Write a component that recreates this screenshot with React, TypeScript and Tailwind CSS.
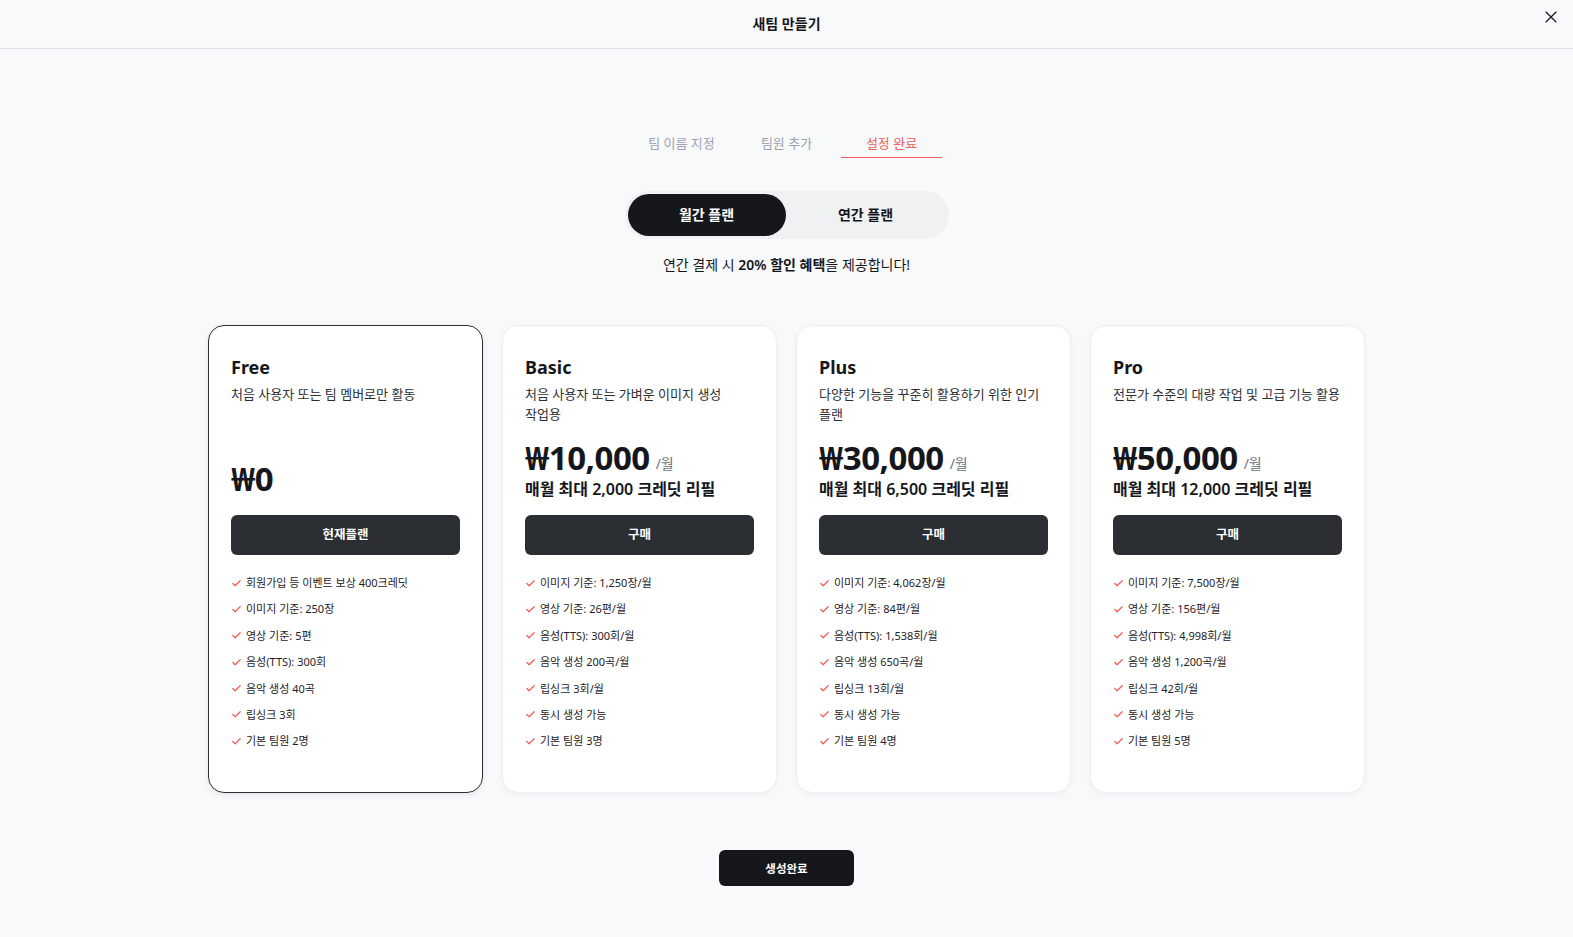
import { Check, X } from 'lucide-react';

interface Plan {
  name: string;
  desc: string;
  price: string;
  credit?: string;
  button: string;
  current?: boolean;
  features: string[];
}

const plans: Plan[] = [
  {
    name: 'Free',
    desc: '처음 사용자 또는 팀 멤버로만 활동',
    price: '₩0',
    button: '현재플랜',
    current: true,
    features: [
      '회원가입 등 이벤트 보상 400크레딧',
      '이미지 기준: 250장',
      '영상 기준: 5편',
      '음성(TTS): 300회',
      '음악 생성 40곡',
      '립싱크 3회',
      '기본 팀원 2명',
    ],
  },
  {
    name: 'Basic',
    desc: '처음 사용자 또는 가벼운 이미지 생성 작업용',
    price: '₩10,000',
    credit: '매월 최대 2,000 크레딧 리필',
    button: '구매',
    features: [
      '이미지 기준: 1,250장/월',
      '영상 기준: 26편/월',
      '음성(TTS): 300회/월',
      '음악 생성 200곡/월',
      '립싱크 3회/월',
      '동시 생성 가능',
      '기본 팀원 3명',
    ],
  },
  {
    name: 'Plus',
    desc: '다양한 기능을 꾸준히 활용하기 위한 인기 플랜',
    price: '₩30,000',
    credit: '매월 최대 6,500 크레딧 리필',
    button: '구매',
    features: [
      '이미지 기준: 4,062장/월',
      '영상 기준: 84편/월',
      '음성(TTS): 1,538회/월',
      '음악 생성 650곡/월',
      '립싱크 13회/월',
      '동시 생성 가능',
      '기본 팀원 4명',
    ],
  },
  {
    name: 'Pro',
    desc: '전문가 수준의 대량 작업 및 고급 기능 활용',
    price: '₩50,000',
    credit: '매월 최대 12,000 크레딧 리필',
    button: '구매',
    features: [
      '이미지 기준: 7,500장/월',
      '영상 기준: 156편/월',
      '음성(TTS): 4,998회/월',
      '음악 생성 1,200곡/월',
      '립싱크 42회/월',
      '동시 생성 가능',
      '기본 팀원 5명',
    ],
  },
];

const font = { fontFamily: '"Noto Sans", "Noto Sans CJK KR", sans-serif' };

function PlanCard({ plan }: { plan: Plan }) {
  return (
    <div
      className={`flex w-[275px] flex-col rounded-2xl bg-white px-[22px] pt-[27px] pb-[43px] ${
        plan.current
          ? 'border border-[#2b2e33] shadow-[0_2px_6px_rgba(0,0,0,0.08)]'
          : 'border border-[#eceef1] shadow-[0_2px_6px_rgba(0,0,0,0.04)]'
      }`}
    >
      <div className="text-lg leading-7 font-bold text-[#15171c]">{plan.name}</div>
      <div className="mt-[3px] h-10 text-[13px] leading-5 break-keep text-[#2b2e33]">{plan.desc}</div>
      <div className="mt-[14px] flex h-[63px] flex-col justify-end">
        <div className={`flex items-end ${plan.credit ? '' : 'mb-[4px]'}`}>
          <span className="text-[33px] leading-9 font-bold tracking-[-0.5px] text-[#15171c]">{plan.price}</span>
          {plan.credit && <span className="mb-[2px] ml-[6px] text-sm leading-5 text-[#6b7280]">/월</span>}
        </div>
        {plan.credit && (
          <div className="mt-[1px] text-base leading-6 font-semibold text-[#15171c]">{plan.credit}</div>
        )}
      </div>
      <button className="mt-[14px] h-10 w-full rounded-md bg-[#2b2e33] text-[12.5px] font-bold text-white">
        {plan.button}
      </button>
      <ul className="mt-[20px] flex flex-col gap-[10.4px]">
        {plan.features.map((f) => (
          <li key={f} className="flex items-center gap-[4px] text-[11px] leading-4 text-[#1f2127]">
            <Check size={11} strokeWidth={2.6} className="shrink-0 text-[#f05a5a]" />
            <span>{f}</span>
          </li>
        ))}
      </ul>
    </div>
  );
}

export default function App() {
  return (
    <div className="min-h-screen bg-[#f8f9fb]" style={font}>
      <header className="relative flex h-[49px] items-center justify-center border-b border-[#e3e5e9]">
        <h1 className="text-sm font-bold text-[#15171c]">새팀 만들기</h1>
        <button className="absolute top-[7px] right-[12px] text-[#15171c]">
          <X size={20} strokeWidth={1.4} />
        </button>
      </header>

      <div className="flex flex-col items-center">
        <div className="mt-[84px] flex gap-[4px]">
          {['팀 이름 지정', '팀원 추가', '설정 완료'].map((t, i) => (
            <div
              key={t}
              className={`w-[101px] pb-[4px] text-center text-[13px] leading-5 ${
                i === 2 ? 'border-b border-[#f25c5c] text-[#f25c5c]' : 'border-b border-transparent text-[#9ca3af]'
              }`}
            >
              {t}
            </div>
          ))}
        </div>

        <div className="mt-[33px] flex h-12 w-[324px] items-center rounded-full bg-[#f0f1f3] p-[3px]">
          <button className="h-[42px] w-[158px] rounded-full bg-[#15171c] text-sm font-bold text-white">
            월간 플랜
          </button>
          <button className="h-[42px] flex-1 rounded-full text-sm font-bold text-[#15171c]">연간 플랜</button>
        </div>

        <p className="mt-[16px] text-sm leading-5 text-[#15171c]">
          연간 결제 시 <span className="font-semibold">20% </span>
          <span className="font-bold">할인 혜택</span>을 제공합니다!
        </p>

        <div className="mt-[50px] flex gap-[19px]">
          {plans.map((p) => (
            <PlanCard key={p.name} plan={p} />
          ))}
        </div>

        <button className="mt-[57px] mb-10 h-9 w-[135px] rounded-md bg-[#15171c] text-[11.5px] font-bold text-white">
          생성완료
        </button>
      </div>
    </div>
  );
}
